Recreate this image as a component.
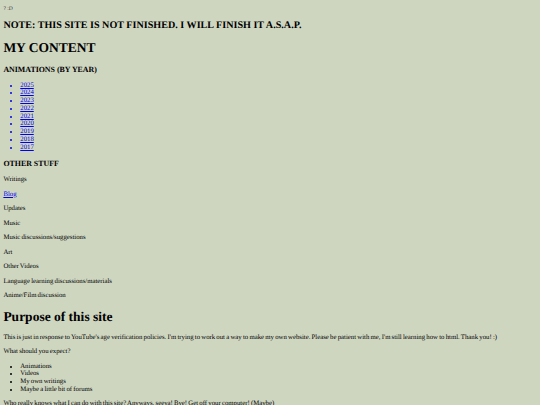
import React from "react";

const years = ["2025", "2024", "2023", "2022", "2021", "2020", "2019", "2018", "2017"];
const stuff = [
  "Updates",
  "Music",
  "Music discussions/suggestions",
  "Art",
  "Other Videos",
  "Language learning discussions/materials",
  "Anime/Film discussion",
];

export default function App() {
  return (
    <div
      className="min-h-screen bg-[#cfd6c0] text-black text-[6.75px] leading-[1.15] p-[3.375px] [text-rendering:geometricPrecision]"
      style={{ fontFamily: '"Liberation Serif", "Times New Roman", serif' }}
    >
      <div className="h-[7.76px] pt-[2.5px] text-[5.5px] leading-[6px] text-[#333]">? :D</div>
      <h2 className="text-[10.125px] font-bold my-[0.83em]">
        NOTE: THIS SITE IS NOT FINISHED. I WILL FINISH IT A.S.A.P.
      </h2>
      <h1 className="text-[13.5px] font-bold my-[0.67em]">MY CONTENT</h1>
      <h3 className="text-[7.9px] font-bold my-[1em]">ANIMATIONS (BY YEAR)</h3>
      <ul className="list-disc pl-[16.875px] my-[1em] marker:text-[#0000ee]">
        {years.map((y) => (
          <li key={y}>
            <a href="#" className="text-[#0000ee] underline">
              {y}
            </a>
          </li>
        ))}
      </ul>
      <h3 className="text-[7.9px] font-bold my-[1em]">OTHER STUFF</h3>
      <div className="[word-spacing:-0.45px]">
        <p className="my-[1em]">Writings</p>
        <p className="my-[1em]">
          <a href="#" className="text-[#0000ee] underline">
            Blog
          </a>
        </p>
        {stuff.map((s) => (
          <p key={s} className="my-[1em]">
            {s}
          </p>
        ))}
      </div>
      <h1 className="text-[13.5px] font-bold my-[0.67em]">Purpose of this site</h1>
      <div className="[word-spacing:-0.45px]">
        <p className="my-[1em]">
          This is just in response to YouTube's age verification policies. I'm trying to work out a way to make my own
          website. Please be patient with me, I'm still learning how to html. Thank you! :)
        </p>
        <p className="my-[1em]">What should you expect?</p>
        <ul className="list-disc pl-[16.875px] my-[1em]">
          <li>Animations</li>
          <li>Videos</li>
          <li>My own writings</li>
          <li>Maybe a little bit of forums</li>
        </ul>
        <p className="my-[1em]">
          Who really knows what I can do with this site? Anyways, seeya! Bye! Get off your computer! (Maybe)
        </p>
      </div>
    </div>
  );
}
